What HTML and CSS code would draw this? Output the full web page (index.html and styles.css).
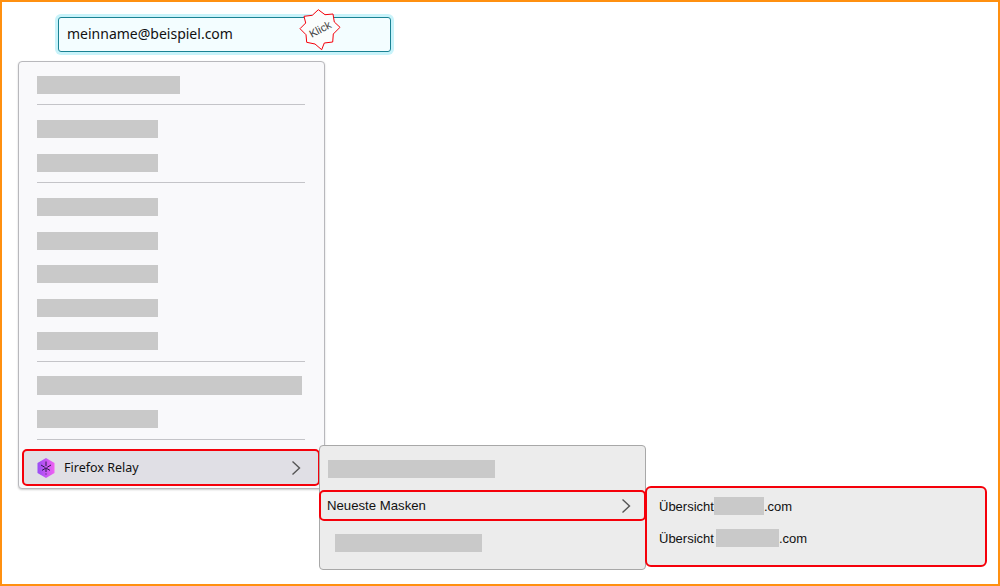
FILE: index.html
```html
<!DOCTYPE html>
<html lang="de">
<head>
    <meta charset="UTF-8">
    <title>Firefox Relay</title>
    <link rel="stylesheet" href="styles.css">
</head>
<body>
    <div class="frame">
        <div class="email-field">
            <span>meinname@beispiel.com</span>
            <svg class="click-star" width="44" height="44" viewBox="-22 -22 44 44">
                <polygon points="-1.7,-19.3 5,-14.3 13,-15 14.3,-7 20,-1.7 13.3,5 12.7,13 4.3,14 1.7,20.7 -5,15 -13.3,13.3 -14,5.7 -20,-0.3 -14.3,-6 -16,-12.7 -7.7,-13.7" fill="#fbfdfd" stroke="#f5000a" stroke-width="1"/>
                <text x="0" y="4" text-anchor="middle" transform="rotate(-28)">Klick</text>
            </svg>
        </div>

        <div class="menu">
            <div class="row"><div class="bar bar-title"></div></div>
            <div class="sep"></div>
            <div class="row"><div class="bar"></div></div>
            <div class="row"><div class="bar"></div></div>
            <div class="sep"></div>
            <div class="row"><div class="bar"></div></div>
            <div class="row"><div class="bar"></div></div>
            <div class="row"><div class="bar"></div></div>
            <div class="row"><div class="bar"></div></div>
            <div class="row"><div class="bar"></div></div>
            <div class="sep"></div>
            <div class="row"><div class="bar bar-wide"></div></div>
            <div class="row"><div class="bar"></div></div>
            <div class="sep"></div>
            <div class="relay-item">
                <svg class="relay-icon" width="20" height="22" viewBox="0 0 20 22">
                    <defs>
                        <linearGradient id="relayGrad" x1="0" y1="0" x2="1" y2="0">
                            <stop offset="0" stop-color="#9a4cf5"/>
                            <stop offset="1" stop-color="#f062f2"/>
                        </linearGradient>
                    </defs>
                    <polygon points="10,1 18.5,6 18.5,16 10,21 1.5,16 1.5,6" fill="url(#relayGrad)"/>
                    <path d="M10 4.5V17.5M5 8L15 14M15 8L5 14" stroke="#2a1a4a" stroke-width="1" stroke-dasharray="4.5 1.5" fill="none"/>
                </svg>
                <span class="relay-label">Firefox Relay</span>
                <svg class="chevron" width="10" height="16" viewBox="0 0 10 16"><path d="M1.5 1.5L8.5 8L1.5 14.5" fill="none" stroke="#555" stroke-width="1.4"/></svg>
            </div>

            <div class="submenu">
                <div class="bar sub-bar-top"></div>
                <div class="masks-item">
                    <span>Neueste Masken</span>
                    <svg class="chevron" width="10" height="16" viewBox="0 0 10 16"><path d="M1.5 1.5L8.5 8L1.5 14.5" fill="none" stroke="#555" stroke-width="1.4"/></svg>
                </div>
                <div class="bar sub-bar-bottom"></div>

                <div class="mask-list">
                    <div class="mask-row">Übersicht<div class="bar mask-a"></div>.com</div>
                    <div class="mask-row">Übersicht<div class="bar mask-b"></div>.com</div>
                </div>
            </div>
        </div>
    </div>
</body>
</html>
```

FILE: styles.css
```css
html, body {
    margin: 0;
    padding: 0;
    background-color: #ffffff;
}
.frame {
    box-sizing: border-box;
    width: 1000px;
    height: 586px;
    border: 2px solid #ff9010;
    padding-top: 15px;
    overflow: hidden;
    font-family: "Liberation Sans", Arial, sans-serif;
    color: #111111;
}
.email-field {
    box-sizing: border-box;
    position: relative;
    display: flex;
    align-items: center;
    width: 333px;
    height: 35px;
    margin-left: 56px;
    padding: 0 0 2px 8px;
    background-color: #f3fdff;
    border: 1px solid #1a8294;
    border-radius: 3px;
    box-shadow: 0 0 0 3px #c8f3fa;
    font-family: "Noto Sans", sans-serif;
    font-size: 14px;
}
.click-star {
    position: absolute;
    left: 239px;
    top: -11px;
}
.click-star text {
    font-family: "Liberation Sans", Arial, sans-serif;
    font-size: 11px;
    fill: #444444;
}
.menu {
    box-sizing: border-box;
    position: relative;
    width: 307px;
    height: 428px;
    margin: 9px 0 0 16px;
    padding: 6px 18px 0 18px;
    background-color: #f9f9fb;
    border: 1px solid #b8b8bc;
    border-radius: 4px;
    box-shadow: 0 1px 2px rgba(0, 0, 0, 0.2);
}
.row {
    display: flex;
    align-items: center;
    height: 33.65px;
}
.bar {
    flex: none;
    width: 121px;
    height: 18px;
    background-color: #c9c9c9;
}
.bar-title {
    width: 143px;
}
.bar-wide {
    width: 265px;
    height: 19px;
}
.sep {
    width: 268px;
    height: 1px;
    margin: 2.6px 0 7px;
    background-color: #c4c4c8;
}
.relay-item {
    box-sizing: border-box;
    display: flex;
    align-items: center;
    height: 37px;
    margin: 9.5px 0 0 -15px;
    width: 298px;
    padding-left: 12px;
    background-color: #e0dfe5;
    border: 2px solid #f5000a;
    border-radius: 5px;
    font-family: "Noto Sans", sans-serif;
    font-size: 12.5px;
}
.relay-icon {
    flex: none;
}
.relay-label {
    margin-left: 8px;
}
.relay-item .chevron {
    margin-left: auto;
    margin-right: 17px;
}
.submenu {
    box-sizing: border-box;
    position: absolute;
    left: 300px;
    top: 383px;
    width: 327px;
    height: 125px;
    padding-top: 14px;
    background-color: #ececec;
    border: 1px solid #a8a8a8;
    border-radius: 4px;
}
.sub-bar-top {
    width: 167px;
    margin-left: 8px;
}
.masks-item {
    box-sizing: border-box;
    display: flex;
    align-items: center;
    justify-content: space-between;
    width: 327px;
    height: 31px;
    margin: 12px 0 13px -1px;
    padding: 0 13px 0 6px;
    border: 2px solid #f5000a;
    border-radius: 5px;
    font-size: 13.2px;
}
.sub-bar-bottom {
    width: 147px;
    margin-left: 15px;
}
.mask-list {
    box-sizing: border-box;
    position: absolute;
    left: 325px;
    top: 40px;
    width: 342px;
    height: 81px;
    padding: 2px 0 0 12px;
    background-color: #ececec;
    border: 2px solid #f5000a;
    border-radius: 6px;
    font-size: 13px;
}
.mask-row {
    display: flex;
    align-items: center;
    height: 32px;
}
.mask-a {
    width: 50px;
}
.mask-b {
    width: 63px;
    margin-left: 2px;
}
```
